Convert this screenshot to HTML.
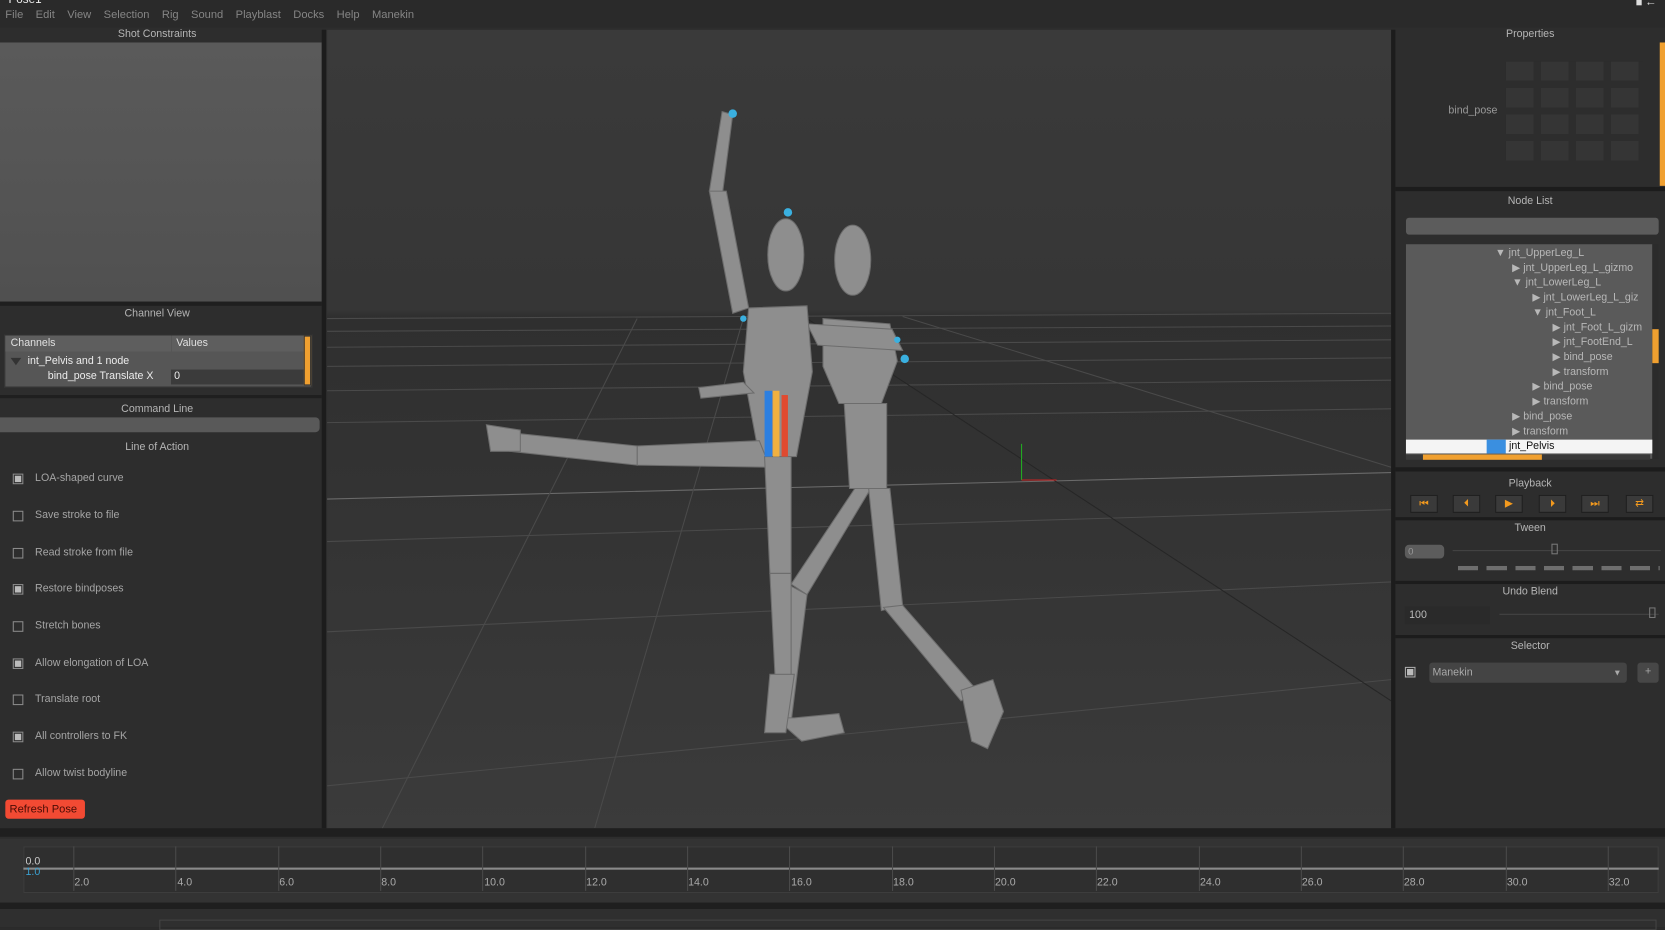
<!DOCTYPE html>
<html><head><meta charset="utf-8"><style>
*{margin:0;padding:0;box-sizing:border-box}
html,body{width:1665px;height:927px;overflow:hidden;background:#2b2b2b;font-family:"Liberation Sans",sans-serif;font-size:10px;color:#a8a8a8}
#w{position:absolute;left:0;top:0;width:1568px;height:873px;transform:scale(1.0619);transform-origin:0 0;background:#2d2d2d}
.a{position:absolute}
.hdr{position:absolute;text-align:center;color:#b5b5b5;font-size:10px}
.cb{position:absolute;left:12px;width:10px;height:10px;border:1px solid #8a8a8a}
.cb.x::after{content:"";position:absolute;left:1px;top:1px;width:6px;height:6px;background:#bbb}
.lb{position:absolute;left:33px;font-size:10px;color:#a5a5a5}
.pb{position:absolute;top:466px;width:26px;height:17px;background:#3a3a3a;border:1px solid #1e1e1e;color:#f39a1e;font-size:10px;text-align:center;line-height:15px}
.tl{position:absolute;top:797px;width:1px;height:42px;background:#4a4a4a}
.tn{position:absolute;top:826px;font-size:10px;color:#aaa}
.nl{position:absolute;font-size:10px;color:#b8b8b8}
</style></head><body><div id="w">
<div class="a" style="left:0;top:0;width:1568px;height:26px;background:#2a2a2a"></div>
<div class="a" style="left:8px;top:-6px;color:#eee;font-size:11px">Pose1</div>
<div class="a" style="left:5px;top:8px;color:#858585;font-size:10.5px">File&nbsp;&nbsp;&nbsp; Edit&nbsp;&nbsp;&nbsp; View&nbsp;&nbsp;&nbsp; Selection&nbsp;&nbsp;&nbsp; Rig&nbsp;&nbsp;&nbsp; Sound&nbsp;&nbsp;&nbsp; Playblast&nbsp;&nbsp;&nbsp; Docks&nbsp;&nbsp;&nbsp; Help&nbsp;&nbsp;&nbsp; Manekin</div>
<div class="a" style="left:1541px;top:0;width:5px;height:5px;background:#ddd"></div>
<div class="a" style="left:1549px;top:-4px;color:#ddd;font-size:11px">←</div>
<div class="hdr" style="left:0;top:27px;width:296px">Shot Constraints</div>
<div class="a" style="left:0;top:40px;width:303px;height:244px;background:linear-gradient(#5a5a5a,#505050)"></div>
<div class="a" style="left:303px;top:28px;width:4px;height:752px;background:#1c1c1c"></div>
<div class="a" style="left:0;top:284px;width:303px;height:4px;background:#1f1f1f"></div>
<div class="hdr" style="left:0;top:290px;width:296px">Channel View</div>
<div class="a" style="left:4px;top:315px;width:290px;height:50px;background:#565656;border:1px solid #333"></div>
<div class="a" style="left:5px;top:316px;width:156px;height:15px;background:#5e5e5e;color:#e0e0e0;padding-left:5px;line-height:15px">Channels</div>
<div class="a" style="left:162px;top:316px;width:124px;height:15px;background:#5e5e5e;color:#e0e0e0;padding-left:4px;line-height:15px">Values</div>
<div class="a" style="left:286px;top:316px;width:7px;height:47px;background:#f0a030;border:1px solid #333"></div>
<div class="a" style="left:10px;top:337px;width:0;height:0;border-left:5px solid transparent;border-right:5px solid transparent;border-top:7px solid #333"></div>
<div class="a" style="left:26px;top:335px;color:#ececec">int_Pelvis and 1 node</div>
<div class="a" style="left:45px;top:349px;color:#ececec">bind_pose Translate X</div>
<div class="a" style="left:161px;top:348px;width:125px;height:14px;background:#3b3b3b;color:#eee;padding-left:3px;line-height:14px">0</div>
<div class="a" style="left:0;top:372px;width:303px;height:3px;background:#1f1f1f"></div>
<div class="hdr" style="left:0;top:380px;width:296px">Command Line</div>
<div class="a" style="left:0;top:393px;width:301px;height:14px;background:#595959;border-radius:0 4px 4px 0"></div>
<div class="hdr" style="left:0;top:416px;width:296px">Line of Action</div>
<div class="cb x" style="top:446px"></div><div class="lb" style="top:445px">LOA-shaped curve</div>
<div class="cb" style="top:481px"></div><div class="lb" style="top:480px">Save stroke to file</div>
<div class="cb" style="top:516px"></div><div class="lb" style="top:515px">Read stroke from file</div>
<div class="cb x" style="top:550px"></div><div class="lb" style="top:549px">Restore bindposes</div>
<div class="cb" style="top:585px"></div><div class="lb" style="top:584px">Stretch bones</div>
<div class="cb x" style="top:620px"></div><div class="lb" style="top:619px">Allow elongation of LOA</div>
<div class="cb" style="top:654px"></div><div class="lb" style="top:653px">Translate root</div>
<div class="cb x" style="top:689px"></div><div class="lb" style="top:688px">All controllers to FK</div>
<div class="cb" style="top:724px"></div><div class="lb" style="top:723px">Allow twist bodyline</div>
<div class="a" style="left:5px;top:753px;width:75px;height:18px;background:#f24a33;border-radius:3px;color:#4a0c05;font-size:10.5px;line-height:18px;padding-left:4px">Refresh Pose</div>
<svg class="a" style="left:308px;top:28px" width="1002" height="752" viewBox="308 28 1002 752">
<defs><linearGradient id="bg" x1="0" y1="0" x2="0" y2="1"><stop offset="0" stop-color="#3a3a3a"/><stop offset=".35" stop-color="#363636"/><stop offset=".36" stop-color="#2f2f2f"/><stop offset="1" stop-color="#3b3b3b"/></linearGradient></defs>
<rect x="308" y="28" width="1002" height="752" fill="url(#bg)"/>
<g stroke="#4a4a4a" stroke-width="1">
<line x1="308" y1="300" x2="1310" y2="295"/><line x1="308" y1="312" x2="1310" y2="307"/><line x1="308" y1="327" x2="1310" y2="320"/>
<line x1="308" y1="345" x2="1310" y2="337"/><line x1="308" y1="368" x2="1310" y2="358"/><line x1="308" y1="398" x2="1310" y2="385"/>
<line x1="308" y1="470" x2="1310" y2="445" stroke="#6a6a6a"/><line x1="308" y1="510" x2="1310" y2="480"/>
<line x1="308" y1="595" x2="1310" y2="548"/><line x1="308" y1="740" x2="1310" y2="640"/>
<line x1="760" y1="300" x2="1310" y2="660" stroke="#262626"/><line x1="600" y1="300" x2="360" y2="780"/>
<line x1="850" y1="298" x2="1310" y2="440" /><line x1="700" y1="300" x2="560" y2="780"/>
</g>
<line x1="962" y1="418" x2="962" y2="452" stroke="#2a2"/><line x1="962" y1="452" x2="995" y2="452" stroke="#c22"/>
<g fill="#8e8e8e" stroke="#6d6d6d" stroke-width="1">
<ellipse cx="803" cy="245" rx="17" ry="33"/>
<path d="M775 300 L838 305 L845 340 L830 380 L790 380 L775 345Z"/>
<path d="M795 380 L835 380 L835 460 L800 460Z"/>
<path d="M805 460 L820 460 L760 560 L745 550Z"/>
<path d="M745 552 L760 560 L745 680 L730 676Z"/>
<path d="M730 676 L748 676 L790 672 L795 690 L755 698 Z"/>
<path d="M818 460 L838 460 L850 570 L830 575Z"/>
<path d="M832 572 L850 570 L920 650 L905 660Z"/>
<path d="M905 650 L935 640 L945 670 L930 705 L915 698Z"/>
<path d="M760 305 L840 310 L850 330 L770 325Z"/>
<ellipse cx="740" cy="240" rx="17" ry="34"/>
<path d="M705 290 L760 288 L765 350 L750 430 L715 430 L700 350Z"/>
<path d="M690 108 L680 105 L668 180 L680 185Z"/>
<path d="M668 180 L684 180 L705 290 L690 295Z"/>
<path d="M700 360 L710 370 L660 375 L658 365Z"/>
<path d="M715 415 L725 440 L600 438 L600 420Z"/>
<path d="M600 420 L600 438 L480 425 L485 408Z"/>
<path d="M458 400 L490 405 L490 425 L462 425Z"/>
<path d="M720 430 L745 430 L745 540 L725 540Z"/>
<path d="M725 540 L745 540 L745 640 L730 640Z"/>
<path d="M725 635 L748 635 L740 690 L720 690Z"/>
</g>
<rect x="720" y="368" width="7" height="62" fill="#2c7fe0"/><rect x="728" y="368" width="6" height="62" fill="#f0b040"/><rect x="736" y="372" width="6" height="58" fill="#e04a30"/>
<g fill="#3ab0e0"><circle cx="690" cy="107" r="4"/><circle cx="742" cy="200" r="4"/><circle cx="852" cy="338" r="4"/><circle cx="845" cy="320" r="3"/><circle cx="700" cy="300" r="3"/></g>
</svg>
<div class="a" style="left:1310px;top:28px;width:4px;height:752px;background:#1c1c1c"></div>
<div class="hdr" style="left:1314px;top:27px;width:254px">Properties</div>
<div class="a" style="left:1364px;top:99px;color:#999">bind_pose</div>
<div class="a" style="left:1418px;top:58px;width:130px;height:95px;
background:repeating-linear-gradient(90deg,#363636 0 26px,transparent 26px 33px),#2d2d2d;
-webkit-mask:repeating-linear-gradient(#000 0 18px,transparent 18px 25px);opacity:.9"></div>
<div class="a" style="left:1563px;top:40px;width:5px;height:135px;background:#f0a030"></div>
<div class="a" style="left:1314px;top:176px;width:254px;height:4px;background:#1c1c1c"></div>
<div class="hdr" style="left:1314px;top:184px;width:254px">Node List</div>
<div class="a" style="left:1324px;top:205px;width:238px;height:16px;background:#5c5c5c;border-radius:3px"></div>
<div class="a" style="left:1324px;top:230px;width:232px;height:202px;background:#5a5a5a"></div>
<div class="a" style="left:1556px;top:230px;width:6px;height:202px;background:#2b2b2b"></div>
<div class="a" style="left:1556px;top:310px;width:6px;height:32px;background:#f0a030"></div>
<div class="a" style="left:1324px;top:414px;width:232px;height:13px;background:#f4f4f4"></div>
<div class="a" style="left:1400px;top:414px;width:18px;height:13px;background:#3a8fe0"></div>
<div class="a" style="left:1324px;top:428px;width:230px;height:5px;background:#3a3a3a"></div>
<div class="a" style="left:1340px;top:428px;width:112px;height:5px;background:#f0a030"></div>
<div class="nl" style="left:1408px;top:233px">▼ jnt_UpperLeg_L</div>
<div class="nl" style="left:1424px;top:247px">▶ jnt_UpperLeg_L_gizmo</div>
<div class="nl" style="left:1424px;top:261px">▼ jnt_LowerLeg_L</div>
<div class="nl" style="left:1443px;top:275px">▶ jnt_LowerLeg_L_giz</div>
<div class="nl" style="left:1443px;top:289px">▼ jnt_Foot_L</div>
<div class="nl" style="left:1462px;top:303px">▶ jnt_Foot_L_gizm</div>
<div class="nl" style="left:1462px;top:317px">▶ jnt_FootEnd_L</div>
<div class="nl" style="left:1462px;top:331px">▶ bind_pose</div>
<div class="nl" style="left:1462px;top:345px">▶ transform</div>
<div class="nl" style="left:1443px;top:359px">▶ bind_pose</div>
<div class="nl" style="left:1443px;top:373px">▶ transform</div>
<div class="nl" style="left:1424px;top:387px">▶ bind_pose</div>
<div class="nl" style="left:1424px;top:401px">▶ transform</div>
<div class="nl" style="left:1421px;top:415px;color:#111">jnt_Pelvis</div>
<div class="a" style="left:1314px;top:440px;width:254px;height:4px;background:#1c1c1c"></div>
<div class="hdr" style="left:1314px;top:450px;width:254px">Playback</div>
<div class="pb" style="left:1328px">⏮</div><div class="pb" style="left:1368px">⏴</div><div class="pb" style="left:1408px">▶</div><div class="pb" style="left:1449px">⏵</div><div class="pb" style="left:1489px">⏭</div><div class="pb" style="left:1531px">⇄</div>
<div class="a" style="left:1314px;top:487px;width:254px;height:3px;background:#1c1c1c"></div>
<div class="hdr" style="left:1314px;top:492px;width:254px">Tween</div>
<div class="a" style="left:1323px;top:513px;width:37px;height:13px;background:#5c5c5c;border-radius:4px;color:#999;font-size:9px;padding-left:3px;line-height:13px">0</div>
<div class="a" style="left:1368px;top:518px;width:196px;height:1px;background:#444"></div>
<div class="a" style="left:1461px;top:512px;width:6px;height:10px;border:1px solid #777"></div>
<div class="a" style="left:1373px;top:533px;width:190px;height:4px;background:repeating-linear-gradient(90deg,#6e6e6e 0 19px,transparent 19px 27px)"></div>
<div class="a" style="left:1314px;top:547px;width:254px;height:3px;background:#1c1c1c"></div>
<div class="hdr" style="left:1314px;top:552px;width:254px">Undo Blend</div>
<div class="a" style="left:1323px;top:571px;width:80px;height:17px;background:#2a2a2a;color:#bbb;padding-left:4px;line-height:17px">100</div>
<div class="a" style="left:1412px;top:578px;width:150px;height:1px;background:#444"></div>
<div class="a" style="left:1553px;top:572px;width:6px;height:10px;border:1px solid #777"></div>
<div class="a" style="left:1314px;top:598px;width:254px;height:3px;background:#1c1c1c"></div>
<div class="hdr" style="left:1314px;top:603px;width:254px">Selector</div>
<div class="cb x" style="left:1323px;top:628px;border-color:#aaa"></div>
<div class="a" style="left:1346px;top:624px;width:186px;height:19px;background:#444;border-radius:3px;color:#aaa;padding-left:3px;line-height:19px">Manekin<span style="position:absolute;right:5px;font-size:8px">▼</span></div>
<div class="a" style="left:1542px;top:624px;width:20px;height:19px;background:#474747;border-radius:3px;color:#aaa;text-align:center;line-height:18px">+</div>
<div class="a" style="left:0;top:780px;width:1568px;height:8px;background:#1f1f1f"></div>
<div class="a" style="left:0;top:790px;width:1568px;height:60px;background:#333"></div>
<div class="a" style="left:22px;top:797px;width:1540px;height:44px;border:1px solid #3d3d3d;background:#2f2f2f"></div>
<div class="a" style="left:22px;top:817px;width:1540px;height:2px;background:#8a8a8a"></div>
<div class="a" style="left:24px;top:806px;font-size:10px;color:#ccc">0.0</div>
<div class="a" style="left:24px;top:816px;font-size:10px;color:#3ba0d0">1.0</div>
<div class="tl" style="left:69px"></div><div class="tn" style="left:70px">2.0</div>
<div class="tl" style="left:165px"></div><div class="tn" style="left:167px">4.0</div>
<div class="tl" style="left:262px"></div><div class="tn" style="left:263px">6.0</div>
<div class="tl" style="left:358px"></div><div class="tn" style="left:359px">8.0</div>
<div class="tl" style="left:454px"></div><div class="tn" style="left:456px">10.0</div>
<div class="tl" style="left:551px"></div><div class="tn" style="left:552px">12.0</div>
<div class="tl" style="left:647px"></div><div class="tn" style="left:648px">14.0</div>
<div class="tl" style="left:743px"></div><div class="tn" style="left:745px">16.0</div>
<div class="tl" style="left:840px"></div><div class="tn" style="left:841px">18.0</div>
<div class="tl" style="left:936px"></div><div class="tn" style="left:937px">20.0</div>
<div class="tl" style="left:1032px"></div><div class="tn" style="left:1033px">22.0</div>
<div class="tl" style="left:1129px"></div><div class="tn" style="left:1130px">24.0</div>
<div class="tl" style="left:1225px"></div><div class="tn" style="left:1226px">26.0</div>
<div class="tl" style="left:1321px"></div><div class="tn" style="left:1322px">28.0</div>
<div class="tl" style="left:1418px"></div><div class="tn" style="left:1419px">30.0</div>
<div class="tl" style="left:1514px"></div><div class="tn" style="left:1515px">32.0</div>
<div class="a" style="left:0;top:850px;width:1568px;height:6px;background:#1f1f1f"></div>
<div class="a" style="left:0;top:856px;width:1568px;height:17px;background:#2f2f2f"></div>
<div class="a" style="left:150px;top:866px;width:1410px;height:10px;border:1px solid #444"></div>
</div></body></html>
